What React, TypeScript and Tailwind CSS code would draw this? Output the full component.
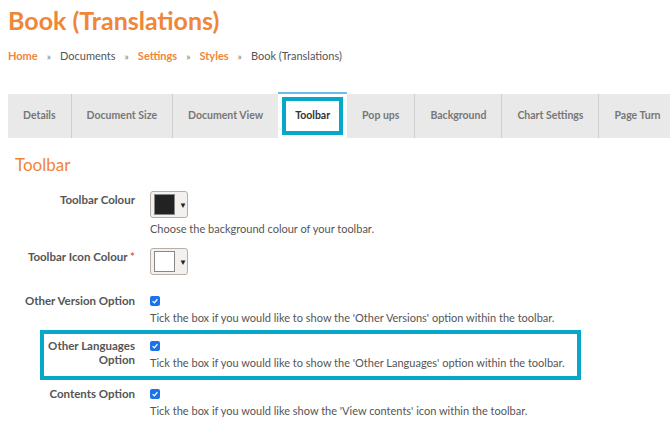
import React from 'react';

const tabs = [
  'Details',
  'Document Size',
  'Document View',
  'Toolbar',
  'Pop ups',
  'Background',
  'Chart Settings',
  'Page Turn',
];

function Swatch({ fill }: { fill: string }) {
  return (
    <div className="flex h-[27px] w-[38px] items-center gap-[4px] rounded-[3px] border border-[#b9aea5] bg-[#f3f1ef] pl-[3px]">
      <div className={`h-[21px] w-[22px] border border-[#888] ${fill}`} />
      <span className="text-[8px] leading-none text-[#222]">▼</span>
    </div>
  );
}

function Check() {
  return (
    <div className="flex h-[10px] w-[10px] items-center justify-center rounded-[2px] bg-[#1a73e8]">
      <svg viewBox="0 0 10 10" className="h-[8px] w-[8px]">
        <path d="M2 5.2 L4.2 7.3 L8 2.8" fill="none" stroke="white" strokeWidth="1.6" />
      </svg>
    </div>
  );
}

export default function App() {
  return (
    <div className="h-[429px] w-[670px] overflow-hidden bg-white font-['Lato','Open_Sans',sans-serif] text-[#555]">
      <h1 className="pl-[8px] pt-[3px] text-[25px] font-bold leading-[34px] text-[#ef8638]">
        Book (Translations)
      </h1>

      <div className="mt-[11px] flex items-center gap-[9px] pl-[8px] text-[11px] leading-[16px]">
        <span className="font-bold text-[#ef8638]">Home</span>
        <span className="text-[10px] text-[#777]">»</span>
        <span>Documents</span>
        <span className="text-[10px] text-[#777]">»</span>
        <span className="font-bold text-[#ef8638]">Settings</span>
        <span className="text-[10px] text-[#777]">»</span>
        <span className="font-bold text-[#ef8638]">Styles</span>
        <span className="text-[10px] text-[#777]">»</span>
        <span>Book (Translations)</span>
      </div>

      <div className="ml-[8px] mt-[30px] flex h-[44px] whitespace-nowrap">
        {tabs.map((t, i) =>
          t === 'Toolbar' ? (
            <div
              key={t}
              className="-mt-[2px] flex h-[46px] items-center border-t-2 border-[#6cbbe8] bg-white px-[4px] pt-[3px] pb-[3px]"
            >
              <div className="flex h-full items-center border-4 border-[#05a8c8] px-[9px] text-[10.5px] font-bold text-[#333]">
                {t}
              </div>
            </div>
          ) : (
            <div
              key={t}
              className={`flex items-center bg-[#e9e9e9] px-[15px] text-[10.5px] font-bold text-[#777] ${
                i > 0 && tabs[i - 1] !== 'Toolbar' ? 'border-l border-[#cfcfcf]' : ''
              } ${i === tabs.length - 1 ? 'flex-1' : ''}`}
            >
              {t}
            </div>
          )
        )}
      </div>

      <h2 className="mt-[16px] pl-[15px] text-[17px] leading-[22px] text-[#ef8638]">Toolbar</h2>

      <div className="mt-[15px] flex flex-col text-[11px] leading-[15px]">
        <div className="flex">
          <div className="w-[135px] pt-[1px] text-right text-[11.5px] font-bold">Toolbar Colour</div>
          <div className="ml-[15px]">
            <Swatch fill="bg-[#222]" />
            <p className="mt-[3px]">Choose the background colour of your toolbar.</p>
          </div>
        </div>

        <div className="mt-[12px] flex">
          <div className="w-[135px] pt-[1px] text-right text-[11.5px] font-bold">
            Toolbar Icon Colour <span className="text-[#e0603a]">*</span>
          </div>
          <div className="ml-[15px]">
            <Swatch fill="bg-white" />
          </div>
        </div>

        <div className="mt-[18px] flex">
          <div className="w-[135px] text-right text-[11.5px] font-bold">Other Version Option</div>
          <div className="ml-[15px] pt-[3px]">
            <Check />
            <p className="mt-[4px]">Tick the box if you would like to show the 'Other Versions' option within the toolbar.</p>
          </div>
        </div>

        <div className="ml-[40px] mt-[5px] flex w-[541px] border-4 border-[#05a8c8] pt-[5px] pb-[6px]">
          <div className="w-[91px] text-right text-[11.5px] font-bold leading-[14px]">Other Languages Option</div>
          <div className="ml-[15px] pt-[2px]">
            <Check />
            <p className="mt-[4px]">Tick the box if you would like to show the 'Other Languages' option within the toolbar.</p>
          </div>
        </div>

        <div className="mt-[6px] flex">
          <div className="w-[135px] text-right text-[11.5px] font-bold">Contents Option</div>
          <div className="ml-[15px] pt-[3px]">
            <Check />
            <p className="mt-[4px]">Tick the box if you would like show the 'View contents' icon within the toolbar.</p>
          </div>
        </div>
      </div>
    </div>
  );
}
